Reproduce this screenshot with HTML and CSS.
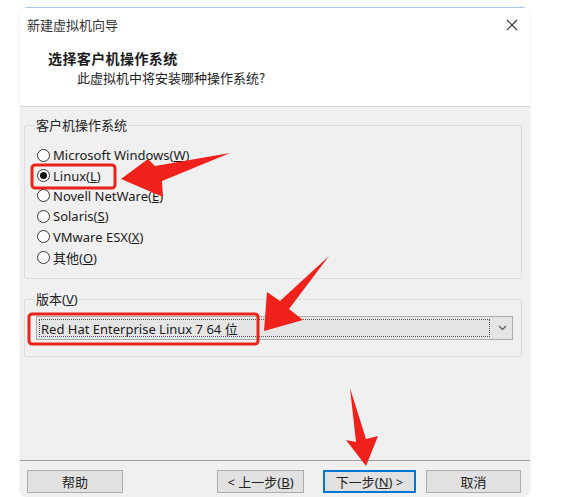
FILE: index.html
```html
<!DOCTYPE html>
<html lang="zh-CN">
<head>
<meta charset="utf-8">
<title>新建虚拟机向导</title>
<link rel="stylesheet" href="styles.css">
</head>
<body>
<div class="window">
  <div class="titlebar">
    <span class="title">新建虚拟机向导</span>
    <svg class="close" width="12" height="12" viewBox="0 0 12 12"><path d="M1 1L11 11M11 1L1 11" stroke="#333" stroke-width="1.1" fill="none"/></svg>
  </div>
  <div class="header">
    <div class="h-title">选择客户机操作系统</div>
    <div class="h-sub">此虚拟机中将安装哪种操作系统?</div>
  </div>
  <div class="content">
    <fieldset class="group group-os">
      <legend>客户机操作系统</legend>
      <div class="radios">
        <div class="radio"><span class="dot"></span><span>Microsoft Windows(<u>W</u>)</span></div>
        <div class="radio"><span class="dot on"></span><span>Linux(<u>L</u>)</span></div>
        <div class="radio"><span class="dot"></span><span>Novell NetWare(<u>E</u>)</span></div>
        <div class="radio"><span class="dot"></span><span>Solaris(<u>S</u>)</span></div>
        <div class="radio"><span class="dot"></span><span>VMware ESX(<u>X</u>)</span></div>
        <div class="radio"><span class="dot"></span><span>其他(<u>O</u>)</span></div>
      </div>
    </fieldset>
    <fieldset class="group group-ver">
      <legend>版本(<u>V</u>)</legend>
      <div class="select">
        <div class="select-text"><span>Red Hat Enterprise Linux 7 64 位</span></div>
        <div class="select-btn"><svg width="9" height="6" viewBox="0 0 9 6"><path d="M1 1L4.5 4.5L8 1" stroke="#555" stroke-width="1.1" fill="none"/></svg></div>
      </div>
    </fieldset>
  </div>
  <div class="footer">
    <button class="btn btn-help">帮助</button>
    <div class="spacer"></div>
    <button class="btn btn-back">&lt; 上一步(<u>B</u>)</button>
    <button class="btn btn-next">下一步(<u>N</u>) &gt;</button>
    <button class="btn btn-cancel">取消</button>
  </div>
</div>
<svg class="annot" width="564" height="497" viewBox="0 0 564 497">
  <rect x="32" y="165" width="83" height="23" rx="3" fill="none" stroke="#e8231a" stroke-width="3"/>
  <rect x="29" y="314" width="229" height="30" rx="3" fill="none" stroke="#e8231a" stroke-width="3"/>
  <polygon fill="#f0201a" points="121,179 148,159 155,166 230,153 162,181 163,197"/>
  <polygon fill="#f0201a" points="264,331 267,292 280,301 329,256 289,309 303,320"/>
  <polygon fill="#f0201a" points="366,466 346,440 356,442 350,388 366,439 378,436"/>
</svg>
</body>
</html>
```

FILE: styles.css
```css
* { box-sizing: border-box; }
html, body { margin: 0; padding: 0; }
body {
  width: 564px;
  height: 497px;
  background: #ffffff;
  font-family: "Noto Sans", "Noto Sans CJK SC", sans-serif;
  font-size: 13px;
  color: #1a1a1a;
  position: relative;
  overflow: hidden;
}
.window {
  margin: 7px 0 0 20px;
  width: 510px;
  height: 490px;
  background: #f0f0f0;
  border-radius: 8px;
  overflow: hidden;
  display: flex;
  flex-direction: column;
  box-shadow: 0 0 3px rgba(0,0,0,0.08);
}
.titlebar {
  height: 34px;
  background: #ffffff;
  border-top: 1px solid #a9c6e6;
  display: flex;
  align-items: center;
  justify-content: space-between;
  padding: 0 12px 0 7px;
}
.title {
  font-family: "Noto Sans CJK SC", sans-serif;
  font-size: 13px;
  color: #333;
}
.close { display: block; }
.header {
  height: 66px;
  background: #ffffff;
  border-bottom: 1px solid #d7d7d7;
  padding-top: 8px;
}
.h-title {
  font-family: "Noto Sans CJK SC", sans-serif;
  font-weight: bold;
  font-size: 14px;
  line-height: 18px;
  padding-left: 28px;
  letter-spacing: 0.4px;
}
.h-sub {
  font-family: "Noto Sans CJK SC", sans-serif;
  font-size: 13px;
  line-height: 18px;
  margin-top: 2px;
  padding-left: 57px;
  color: #222;
}
.content {
  flex: 1;
  padding: 9px 8px 0 4px;
}
.group {
  margin: 0;
  border: 1px solid #dcdcdc;
  border-radius: 2px;
  padding: 0 0 0 10px;
  min-width: 0;
}
.group legend {
  padding: 0 1px;
  line-height: 18px;
  font-size: 13px;
  color: #222;
}
.group-os { padding-bottom: 11px; }
.radios { margin-top: 11px; }
.radio {
  height: 20.4px;
  display: flex;
  align-items: center;
  gap: 3px;
  padding-left: 2px;
  white-space: nowrap;
}
.dot {
  width: 13px;
  height: 13px;
  border: 1px solid #333;
  border-radius: 50%;
  background: #fff;
  position: relative;
  flex: none;
}
.dot.on::after {
  content: "";
  position: absolute;
  left: 2px;
  top: 2px;
  width: 7px;
  height: 7px;
  border-radius: 50%;
  background: #111;
}
.group-ver {
  margin-top: 11px;
  padding-bottom: 16px;
}
.select {
  margin-top: 8px;
  margin-left: 1px;
  width: 477px;
  height: 24px;
  background: #e5e5e5;
  border: 1px solid #adadad;
  display: flex;
}
.select-text {
  flex: 1;
  padding: 2px;
}
.select-text span {
  display: flex;
  align-items: center;
  height: 100%;
  border: 1px dotted #555;
  padding-left: 1px;
  white-space: nowrap;
}
.select-btn {
  width: 20px;
  display: flex;
  align-items: center;
  justify-content: center;
}
.footer {
  height: 37px;
  border-top: 1px solid #a0a0a0;
  display: flex;
  align-items: flex-start;
  padding: 9px 9px 0 7px;
}
.spacer { flex: 1; }
.btn {
  font-family: "Noto Sans", "Noto Sans CJK SC", sans-serif;
  font-size: 13px;
  color: #222;
  height: 23px;
  background: #e1e1e1;
  border: 1px solid #adadad;
  padding: 0;
  line-height: 20px;
}
.btn-help { width: 96px; }
.btn-back { width: 87px; }
.btn-next {
  width: 93px;
  margin-left: 19px;
  border-color: #0078d7;
  box-shadow: inset 0 0 0 1px #0078d7;
}
.btn-cancel { width: 95px; margin-left: 10px; }
.annot {
  position: absolute;
  left: 0;
  top: 0;
  pointer-events: none;
}
```
